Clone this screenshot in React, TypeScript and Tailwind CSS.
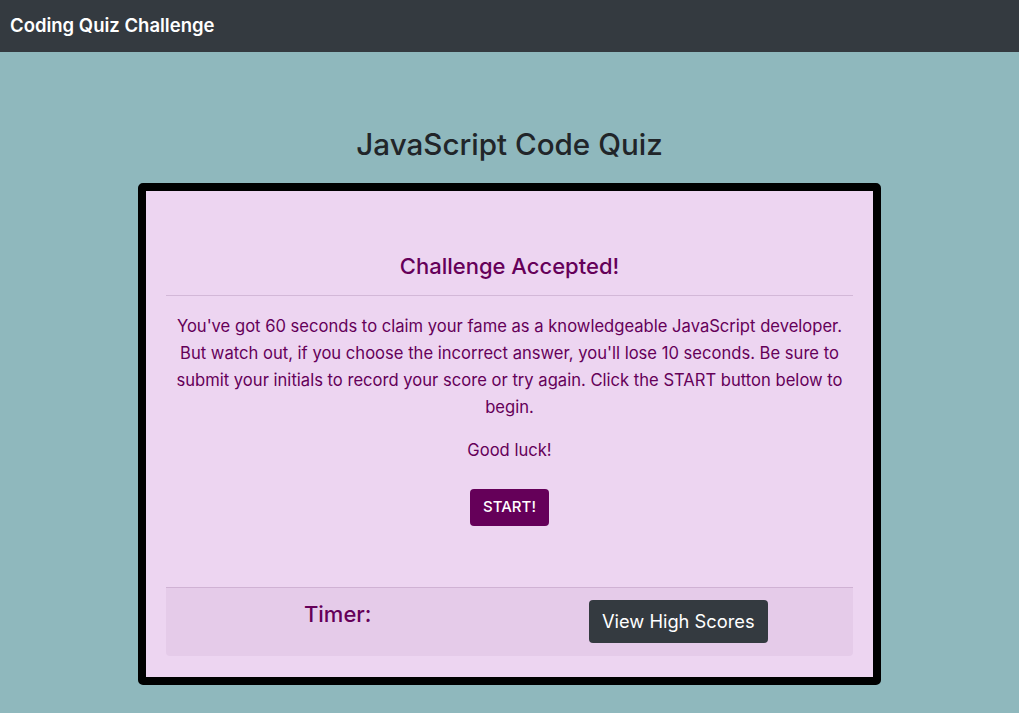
export default function App() {
  return (
    <div className="min-h-[713px] bg-[#8fb8bd] font-['Inter',sans-serif]">
      <nav className="flex h-[52px] items-center bg-[#343a40] px-[10px]">
        <span className="text-[18.5px] font-semibold text-white">Coding Quiz Challenge</span>
      </nav>

      <main className="flex flex-col items-center">
        <h1 className="mt-[72px] mb-[19px] text-[29.6px] leading-[40px] font-medium text-[#212529]">
          JavaScript Code Quiz
        </h1>

        <div className="w-[743px] rounded-[5px] border-[8px] border-black bg-[#edd5f1] px-[20px] pt-[60px] pb-[21px]">
          <h3 className="text-center text-[22px] leading-[30px] font-medium text-[#650059]">
            Challenge Accepted!
          </h3>
          <hr className="mt-[14px] border-t border-[#d3b8d8]" />
          <p className="mt-[17px] text-center text-[16.6px] leading-[27px] text-[#650059]">
            You've got 60 seconds to claim your fame as a knowledgeable JavaScript developer. But watch out, if you
            choose the incorrect answer, you'll lose 10 seconds. Be sure to submit your initials to record your score
            or try again. Click the START button below to begin.
          </p>
          <p className="mt-[16px] text-center text-[16.6px] leading-[27px] text-[#650059]">Good luck!</p>
          <div className="mt-[25px] flex justify-center">
            <button className="h-[37px] rounded-[4px] bg-[#650059] px-[13px] text-[15px] font-medium text-white">
              START!
            </button>
          </div>

          <div className="mt-[61px] grid grid-cols-2 rounded-b-[4px] border-t border-[#d0b2d4] bg-[#e5cbe9] pt-[12px] pb-[13px]">
            <div className="flex justify-center">
              <span className="text-[22px] leading-[28px] font-medium text-[#650059]">Timer:</span>
            </div>
            <div className="flex justify-center pr-[6px]">
              <button className="h-[43px] rounded-[4px] bg-[#343a40] px-[13px] text-[18.3px] text-white">
                View High Scores
              </button>
            </div>
          </div>
        </div>
      </main>
    </div>
  );
}
